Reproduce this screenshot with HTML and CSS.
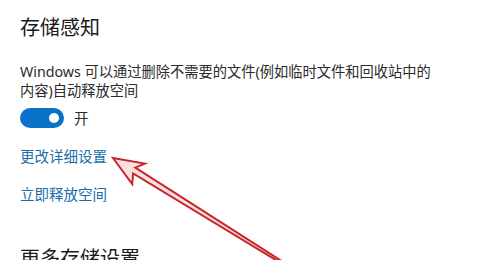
FILE: index.html
```html
<!DOCTYPE html>
<html lang="zh-CN">
<head>
<meta charset="utf-8">
<title>存储感知</title>
<link rel="stylesheet" href="styles.css">
</head>
<body>
<div class="page">
	<h2 class="title">存储感知</h2>
	<p class="desc">Windows 可以通过删除不需要的文件(例如临时文件和回收站中的<br>内容)自动释放空间</p>
	<div class="toggle-row">
		<span class="toggle"><span class="knob"></span></span>
		<span class="state">开</span>
	</div>
	<a class="link first" href="#">更改详细设置</a>
	<a class="link" href="#">立即释放空间</a>
	<h2 class="title more">更多存储设置</h2>
	<!--红色箭头标注-->
	<svg class="arrow" width="500" height="260" viewBox="0 0 500 260">
		<polygon points="113,158 144.8,163.6 135.3,167.6 300.4,273 299.6,274.4 133.1,173.5 132.2,184" fill="#f9e1e1" stroke="#c8262c" stroke-width="2" stroke-linejoin="miter"/>
	</svg>
</div>
</body>
</html>
```

FILE: styles.css
```css
*{margin:0;padding:0;}
body{background:#fff;font-family:"Noto Sans","Noto Sans CJK SC",sans-serif;color:#2b2b2b;overflow:hidden;}
.page{position:relative;width:500px;height:260px;padding:14px 0 0 20px;box-sizing:border-box;display:flex;flex-direction:column;align-items:flex-start;}
.title{font-size:20px;line-height:28px;font-weight:normal;color:#1a1a1a;}
.desc{margin-top:20px;font-size:14.25px;line-height:19px;}
.toggle-row{margin-top:8px;display:flex;align-items:center;gap:10px;height:20px;}
.toggle{width:44px;height:20px;border-radius:10px;background:#0a72c8;display:flex;align-items:center;justify-content:flex-end;padding-right:5px;box-sizing:border-box;}
.knob{width:10px;height:10px;border-radius:50%;background:#fff;}
.state{font-size:14.5px;line-height:20px;}
.link{margin-top:18px;font-size:14.5px;line-height:20px;color:#1a6ea8;text-decoration:none;}
.more{margin-top:41px;}
.arrow{position:absolute;left:0;top:0;}
```
